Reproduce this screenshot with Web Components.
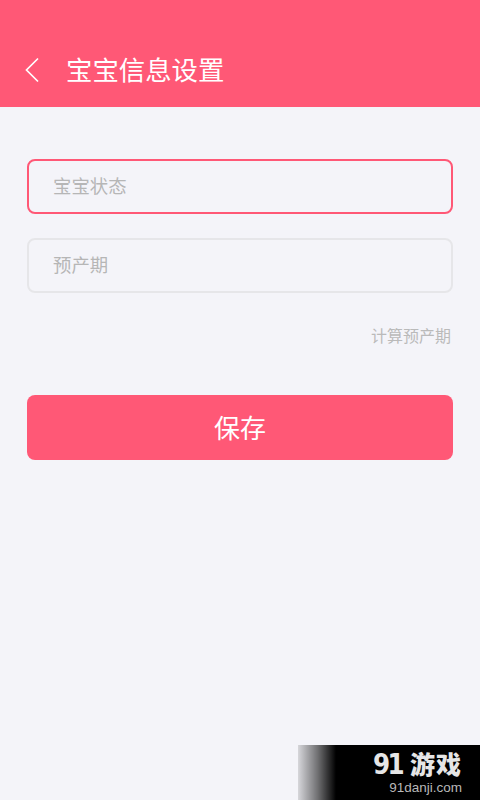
<!DOCTYPE html>
<html lang="zh">
<head>
<meta charset="utf-8">
<title>宝宝信息设置</title>
<style>
    html,body{margin:0;height:100%;}
    body{
        background:#f4f4f9;
        font-family:"Noto Sans CJK SC","Noto Sans",sans-serif;
    }
</style>
</head>
<body>
<baby-app>
    <app-header>宝宝信息设置</app-header>
    <baby-form>
        <form-field active>宝宝状态</form-field>
        <form-field>预产期</form-field>
        <form-link>计算预产期</form-link>
        <form-button>保存</form-button>
    </baby-form>
    <site-mark></site-mark>
</baby-app>

<script>
function makeEl(name, html) {
    const tpl = document.createElement('template');
    tpl.innerHTML = html;
    customElements.define(name, class extends HTMLElement {
        constructor() {
            super();
            this.attachShadow({ mode: 'open' });
            this.shadowRoot.appendChild(tpl.content.cloneNode(true));
        }
    });
}

makeEl('baby-app', `
    <style>
        :host{display:flex;flex-direction:column;position:relative;height:800px;overflow:hidden;}
    </style>
    <slot></slot>
`);

makeEl('app-header', `
    <style>
        :host{
            display:flex;align-items:center;box-sizing:border-box;
            height:107px;padding:31px 0 0 24px;
            background:#ff5876;color:#fff;
            font-size:26.4px;line-height:1;
        }
        svg{display:block;width:16px;height:26px;margin:2px 26px 0 0;}
    </style>
    <svg viewBox="0 0 16 26"><path d="M14 1.5 2.5 13 14 24.5" fill="none" stroke="#fff" stroke-width="1.7"/></svg>
    <slot></slot>
`);

makeEl('baby-form', `
    <style>
        :host{display:flex;flex-direction:column;padding:52px 27px 0;}
    </style>
    <slot></slot>
`);

makeEl('form-field', `
    <style>
        :host{
            display:flex;align-items:center;box-sizing:border-box;
            height:55px;margin-bottom:24px;padding:0 24px 3px;
            border:2px solid #e6e6e9;border-radius:8px;
            color:#b6b6b6;font-size:18.4px;
        }
        :host([active]){border-color:#ff5876;}
    </style>
    <slot></slot>
`);

makeEl('form-link', `
    <style>
        :host{
            display:block;margin-top:6px;padding-right:2px;
            text-align:right;color:#bababa;font-size:16px;line-height:24px;
        }
    </style>
    <slot></slot>
`);

makeEl('form-button', `
    <style>
        :host{
            display:flex;align-items:center;justify-content:center;
            height:65px;margin-top:48px;padding-bottom:2px;box-sizing:border-box;
            background:#ff5876;border-radius:8px;color:#fff;font-size:26px;
        }
    </style>
    <slot></slot>
`);

// watermark, sits over the page corner
makeEl('site-mark', `
    <style>
        :host{
            position:absolute;right:0;bottom:0;width:182px;height:55px;
            background:linear-gradient(90deg,rgba(0,0,0,.12) 0,rgba(0,0,0,.55) 20px,#000 38px);
        }
        .in{display:flex;flex-direction:column;align-items:flex-end;padding:5px 18px 0 0;color:#e6e6e6;}
        .logo{display:flex;align-items:baseline;height:29px;line-height:29px;}
        .num{font:900 28px/29px "DejaVu Sans",sans-serif;letter-spacing:-3px;margin-right:6px;transform:scaleX(.88);}
        .cn{font:900 25px/29px "Liberation Sans","Noto Sans CJK SC",sans-serif;letter-spacing:1px;}
        .url{font:13.5px/16px "Liberation Sans",sans-serif;color:#b8b8b8;margin-top:1px;}
    </style>
    <div class="in">
        <div class="logo"><span class="num">91</span><span class="cn">游戏</span></div>
        <div class="url">91danji.com</div>
    </div>
`);
</script>
</body>
</html>
